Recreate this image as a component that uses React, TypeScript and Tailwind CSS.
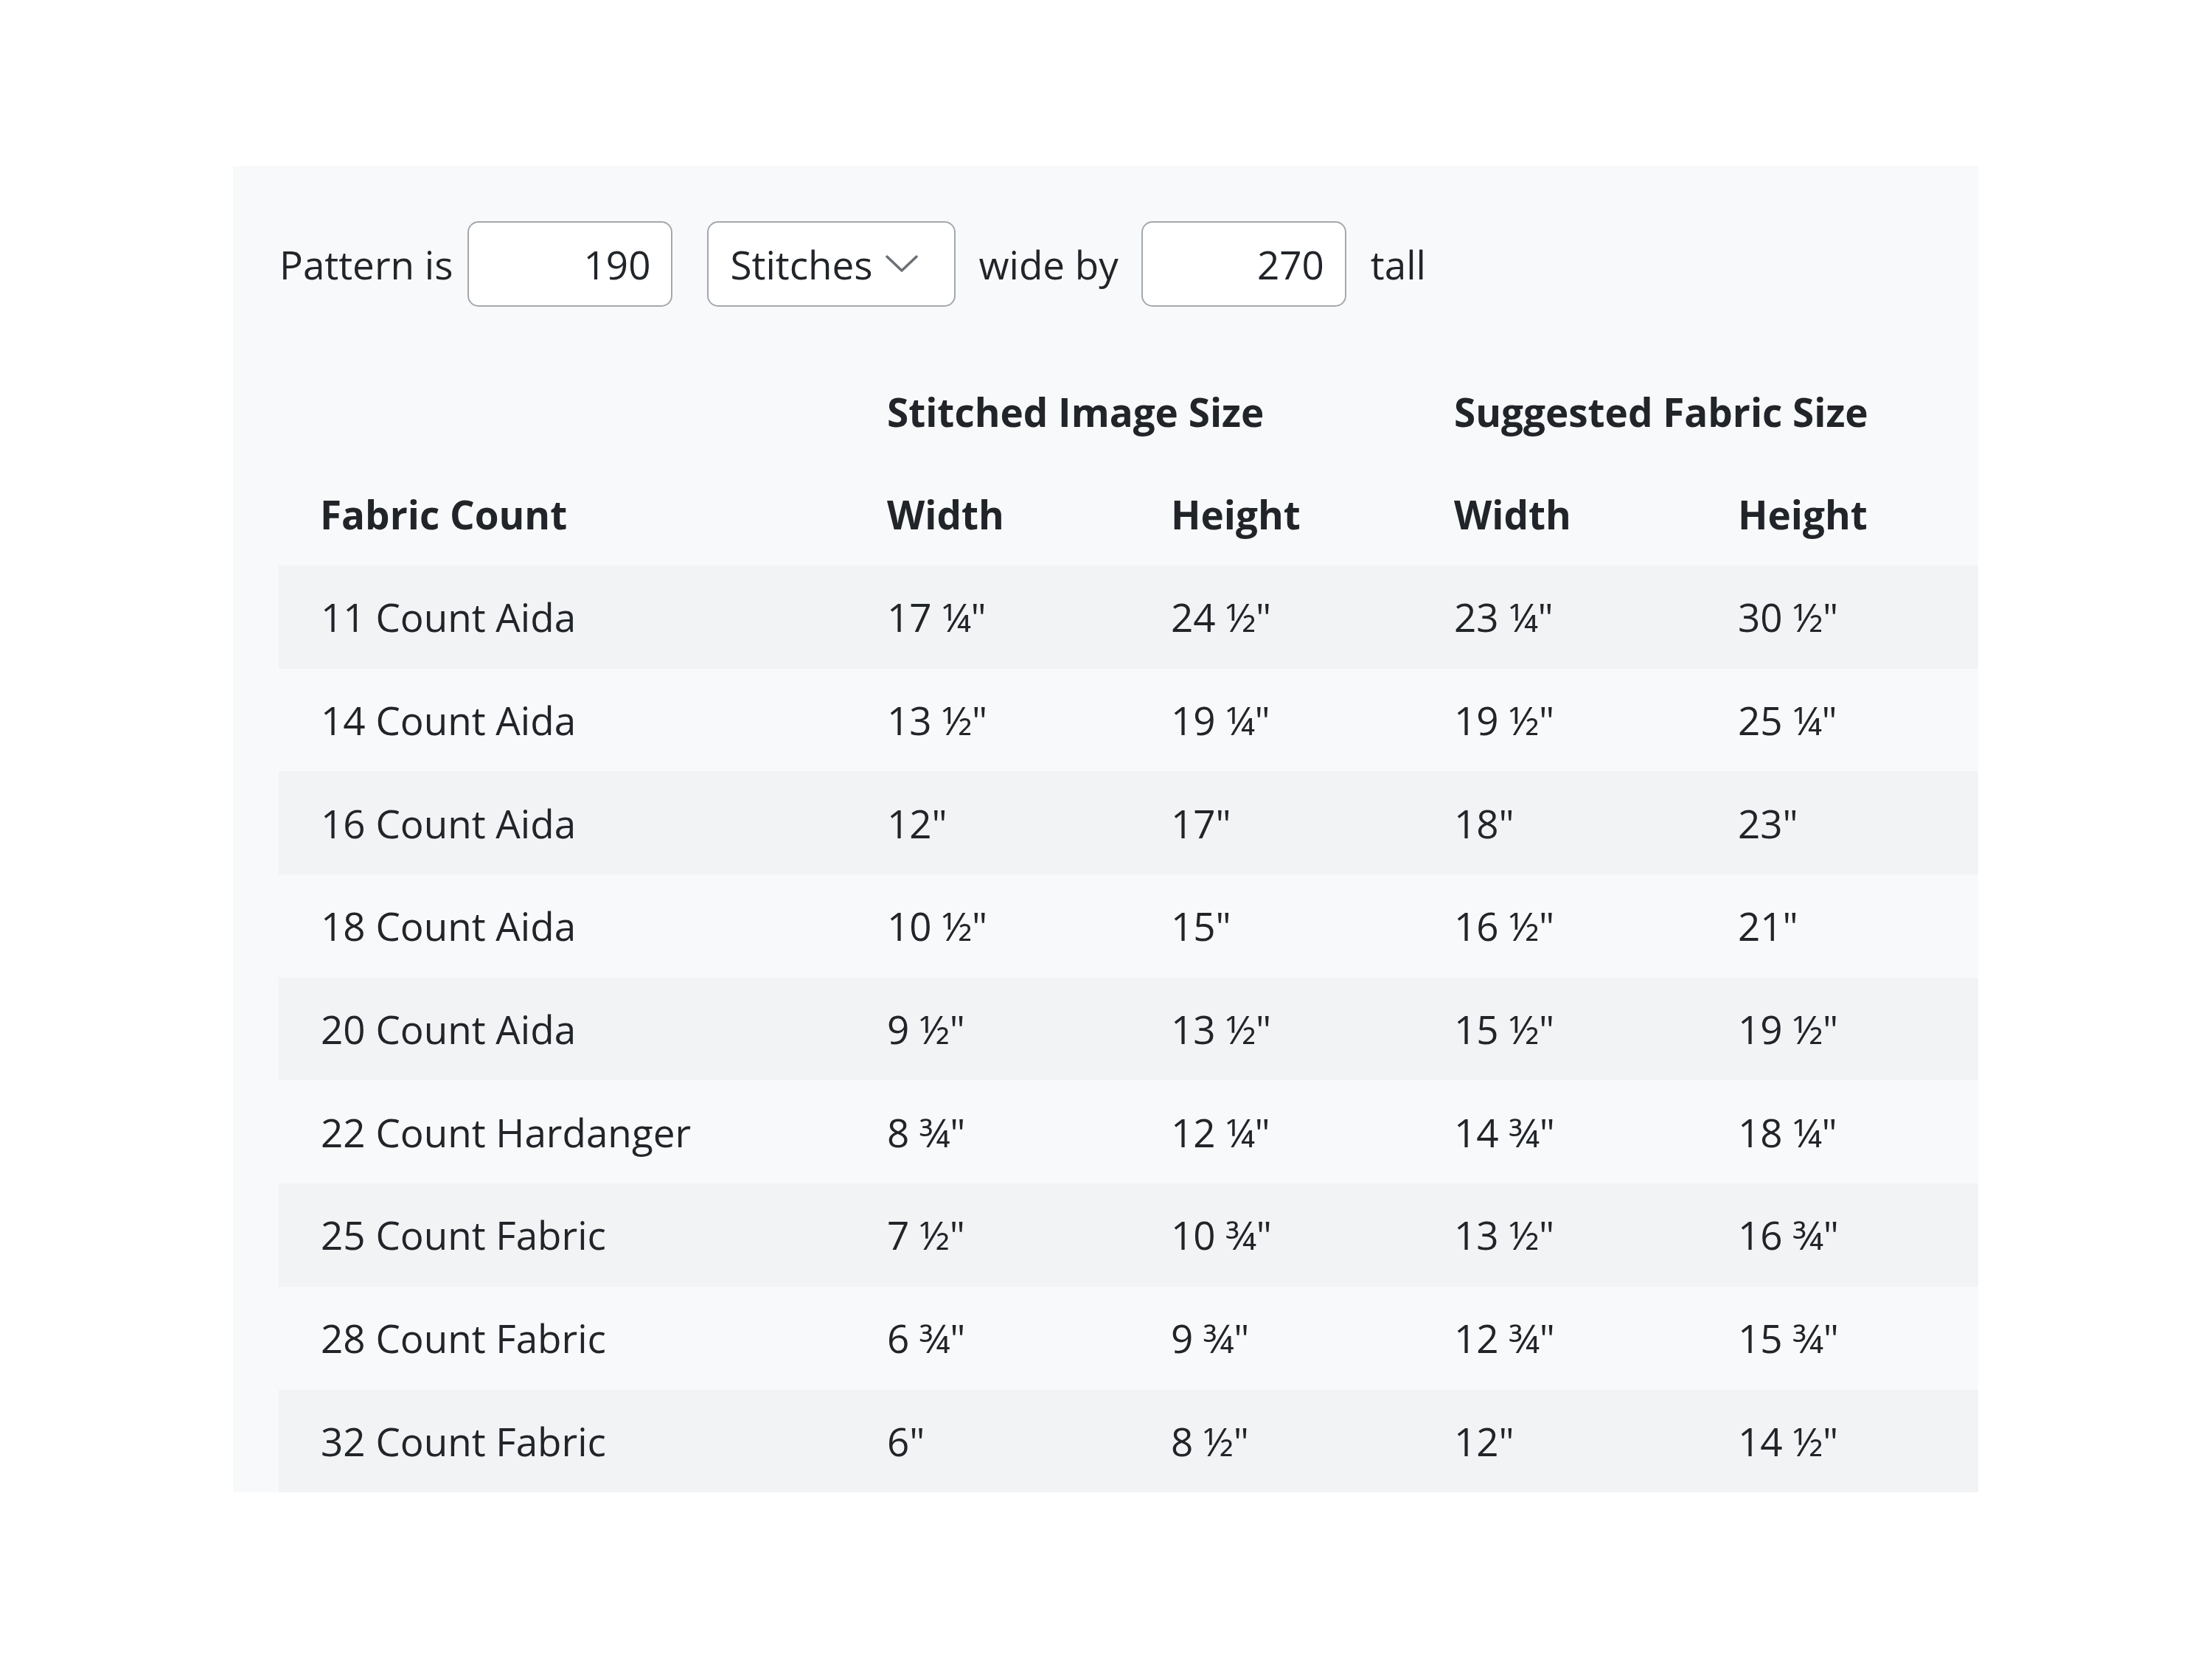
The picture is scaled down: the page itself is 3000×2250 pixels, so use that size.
import React from "react";

const rows: [string, string, string, string, string][] = [
  ["11 Count Aida", "17 ¼\"", "24 ½\"", "23 ¼\"", "30 ½\""],
  ["14 Count Aida", "13 ½\"", "19 ¼\"", "19 ½\"", "25 ¼\""],
  ["16 Count Aida", "12\"", "17\"", "18\"", "23\""],
  ["18 Count Aida", "10 ½\"", "15\"", "16 ½\"", "21\""],
  ["20 Count Aida", "9 ½\"", "13 ½\"", "15 ½\"", "19 ½\""],
  ["22 Count Hardanger", "8 ¾\"", "12 ¼\"", "14 ¾\"", "18 ¼\""],
  ["25 Count Fabric", "7 ½\"", "10 ¾\"", "13 ½\"", "16 ¾\""],
  ["28 Count Fabric", "6 ¾\"", "9 ¾\"", "12 ¾\"", "15 ¾\""],
  ["32 Count Fabric", "6\"", "8 ½\"", "12\"", "14 ½\""],
];

const gridCols = "grid grid-cols-[770px_385px_384px_385px_381px]";

export default function App() {
  return (
    <div
      className="min-h-screen bg-white pt-[225px] pl-[316px] text-[#212529]"
      style={{ fontFamily: '"Open Sans", "Noto Sans", sans-serif' }}
    >
      <div className="w-[2367px] bg-[#f8f9fa] pl-[62px] pt-[75px]">
        {/* Controls */}
        <div className="flex items-center h-[116px] text-[53px] leading-none">
          <span className="ml-[1px]">Pattern is</span>
          <div className="ml-[20px] w-[278px] h-[116px] bg-white border-2 border-[#a4a8ad] rounded-[15px] flex items-center justify-end pr-[28px]">
            190
          </div>
          <div className="ml-[47px] w-[337px] h-[116px] bg-white border-2 border-[#a4a8ad] rounded-[15px] flex items-center pl-[29px] pr-[49px] justify-between">
            <span>Stitches</span>
            <svg width="44" height="24" viewBox="0 0 44 24" fill="none">
              <path d="M2 2 L22 21 L42 2" stroke="#6b7076" strokeWidth="3.5" strokeLinecap="round" strokeLinejoin="round" />
            </svg>
          </div>
          <span className="ml-[31px]">wide by</span>
          <div className="ml-[31px] w-[278px] h-[116px] bg-white border-2 border-[#a4a8ad] rounded-[15px] flex items-center justify-end pr-[28px]">
            270
          </div>
          <span className="ml-[33px]">tall</span>
        </div>

        {/* Table */}
        <div className="mt-[73px] text-[53px] leading-none">
          <div className={`${gridCols} h-[139px] items-center font-bold`}>
            <div />
            <div className="col-span-2 pl-[55px]">Stitched Image Size</div>
            <div className="col-span-2 pl-[55px]">Suggested Fabric Size</div>
          </div>
          <div className={`${gridCols} h-[139px] items-center font-bold`}>
            <div className="pl-[56px]">Fabric Count</div>
            <div className="pl-[55px]">Width</div>
            <div className="pl-[55px]">Height</div>
            <div className="pl-[55px]">Width</div>
            <div className="pl-[55px]">Height</div>
          </div>
          {rows.map((r, i) => (
            <div
              key={r[0]}
              className={`${gridCols} h-[139.7px] items-center ${i % 2 === 0 ? "bg-[#f2f3f5]" : "bg-transparent"}`}
            >
              <div className="pl-[57px]">{r[0]}</div>
              <div className="pl-[55px]">{r[1]}</div>
              <div className="pl-[55px]">{r[2]}</div>
              <div className="pl-[55px]">{r[3]}</div>
              <div className="pl-[55px]">{r[4]}</div>
            </div>
          ))}
        </div>
      </div>
    </div>
  );
}
